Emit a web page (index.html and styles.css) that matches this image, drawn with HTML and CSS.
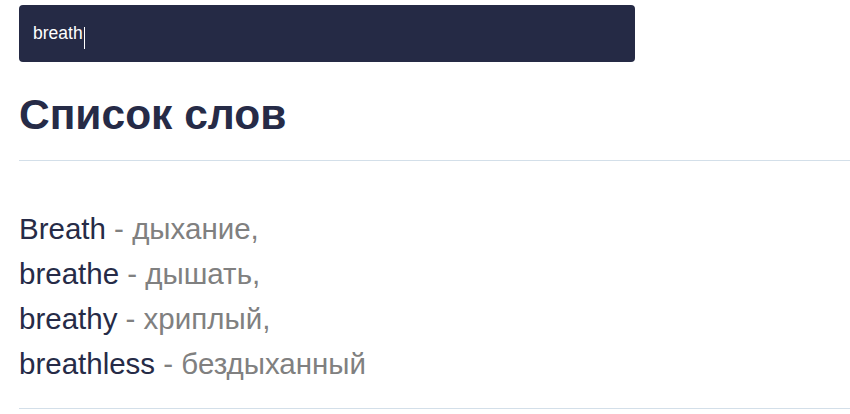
FILE: index.html
```html
<!DOCTYPE html>
<html lang="ru">
  <head>
    <meta charset="UTF-8" />
    <meta name="viewport" content="width=device-width, initial-scale=1.0" />
    <title>Список слов</title>
    <link rel="stylesheet" href="styles.css">
  </head>
  <body>
    <div class="container">
      <div class="search">
        <input type="text" id="search" value="breath" />
        <span class="caret"></span>
      </div>
      <h1>Список слов</h1>
      <hr />
      <ul class="word-list">
        <li><span class="word">Breath</span> - дыхание,</li>
        <li><span class="word">breathe</span> - дышать,</li>
        <li><span class="word">breathy</span> - хриплый,</li>
        <li><span class="word">breathless</span> - бездыханный</li>
      </ul>
      <hr />
    </div>
  </body>
</html>
```

FILE: styles.css
```css
/* General Body Styles */
body {
  margin: 0;
  padding: 0;
  font-family: "Liberation Sans", Arial, sans-serif;
  background: #ffffff;
  color: #262b47;
}

.container {
  padding: 5px 0 0 19px;
}

/* Search field */
.search {
  position: relative;
  width: 616px;
}

.search input {
  display: block;
  box-sizing: border-box;
  width: 616px;
  height: 57px;
  padding: 0 14px;
  font-family: "Liberation Sans", Arial, sans-serif;
  font-size: 17.5px;
  color: #ffffff;
  background: #252a45;
  border: none;
  border-radius: 4px;
  outline: none;
}

.caret {
  position: absolute;
  left: 65px;
  top: 22px;
  width: 1px;
  height: 22px;
  background: #ffffff;
}

h1 {
  margin: 29px 0 0;
  font-size: 42.5px;
  line-height: 48px;
  font-weight: bold;
  color: #262b47;
}

hr {
  margin: 0;
  border: none;
  border-top: 1px solid #d3dfe9;
}

h1 + hr {
  margin-top: 21px;
}

/* Word list */
.word-list {
  list-style: none;
  margin: 45px 0 22px;
  padding: 0;
  font-size: 29.5px;
  line-height: 45px;
  color: #808080;
}

.word-list .word {
  color: #262b47;
}
```
